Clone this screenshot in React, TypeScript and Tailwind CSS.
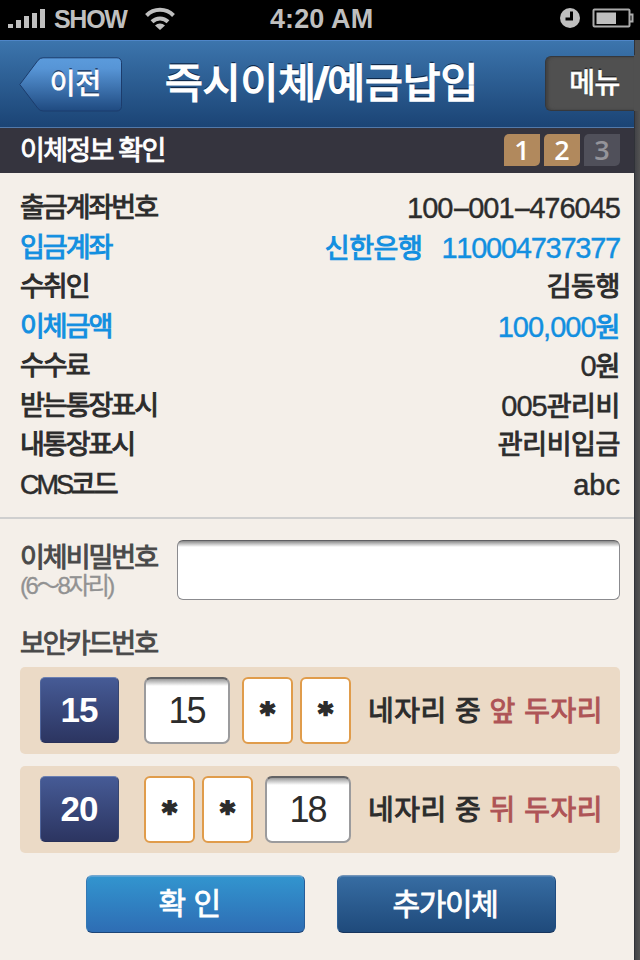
import React from "react";

type Row = { label: React.ReactNode; value: React.ReactNode; accent?: boolean };

const Dash = () => <span className="mx-[3.500px] inline-block scale-x-[2]">-</span>;

const rows: Row[] = [
  { label: "출금계좌번호", value: <Num>100<Dash />001<Dash />476045</Num> },
  { label: "입금계좌", value: <><Ko>신한은행</Ko><span className="w-[19px]" /><span className="text-[29px] tracking-[-1.250px] [-webkit-text-stroke:0.4px_currentColor] [font-kerning:none]">110004737377</span></>, accent: true },
  { label: "수취인", value: <Ko>김동행</Ko> },
  { label: "이체금액", value: <><Num>100,000</Num><Ko>원</Ko></>, accent: true },
  { label: "수수료", value: <><Num>0</Num><Ko>원</Ko></> },
  { label: "받는통장표시", value: <><Num>005</Num><Ko>관리비</Ko></> },
  { label: "내통장표시", value: <Ko>관리비입금</Ko> },
  { label: <><span className="tracking-[-3px] [-webkit-text-stroke:0.5px_currentColor]">CMS</span>코드</>, value: <span className="text-[29px] [-webkit-text-stroke:0.5px_currentColor]">abc</span> },
];

function Num({ children }: { children: React.ReactNode }) {
  return <span className="text-[29px] tracking-[-1px] [-webkit-text-stroke:0.4px_currentColor] [font-kerning:none]">{children}</span>;
}

function Ko({ children }: { children: React.ReactNode }) {
  return <span className="text-[27px] tracking-[-0.4px] [-webkit-text-stroke:1px_currentColor]">{children}</span>;
}

function StatusBar() {
  return (
    <div className="flex h-[40px] shrink-0 items-center bg-black text-[#bfbfbf]">
      <svg width="38" height="20" className="ml-[8px] mt-[-3px]" fill="#bfbfbf">
        <rect x="0" y="15" width="5" height="4" />
        <rect x="8" y="11" width="5" height="8" />
        <rect x="16" y="7" width="5" height="12" />
        <rect x="24" y="4" width="5" height="15" />
        <rect x="32" y="0" width="5" height="19" />
      </svg>
      <span className="ml-[8px] mt-[-1px] w-[72px] text-[25px] font-bold leading-none tracking-[-1.300px]">SHOW</span>
      <svg width="32" height="24" viewBox="0 0 32 24" className="ml-[18px] mt-[-2px]" fill="none" stroke="#bfbfbf" strokeWidth="4">
        <path d="M2.500 8.500a19 19 0 0 1 27 0" />
        <path d="M8 14.700a11.500 11.500 0 0 1 16 0" />
        <path d="M16 23l-5-4.500a7.500 7.500 0 0 1 10 0z" fill="#bfbfbf" stroke="none" />
      </svg>
      <span className="ml-[94px] mt-[-1px] w-[110px] whitespace-nowrap text-[27px] font-bold leading-none tracking-[0.100px]">4:20 AM</span>
      <svg width="20" height="20" className="ml-[180px] mt-[-4px]">
        <circle cx="10" cy="10" r="10" fill="#bfbfbf" />
        <path d="M11.500 3.500v7.500H5.500" fill="none" stroke="#000" strokeWidth="3" />
      </svg>
      <svg width="42" height="20" className="ml-[12px] mt-[-4px]">
        <rect x="1.500" y="1.500" width="36" height="17" rx="1" fill="none" stroke="#aaa" strokeWidth="2" />
        <rect x="4.500" y="4.500" width="19.500" height="11.500" fill="#bfbfbf" />
        <path d="M38 6.500h2.500v7H38" fill="none" stroke="#aaa" strokeWidth="2" />
      </svg>
    </div>
  );
}

function Header() {
  return (
    <header className="flex h-[88px] shrink-0 items-start border-b border-t border-b-[#5279aa] border-t-[#4f86c8] bg-linear-to-b from-[#3c75ad] to-[#1b4475]">
      <button className="relative ml-[19px] mt-[16px] h-[55px] w-[103px] shrink-0">
        <svg width="103" height="55" className="absolute left-0 top-0">
          <defs>
            <linearGradient id="back" x1="0" y1="0" x2="0" y2="1">
              <stop offset="0" stopColor="#5b9bdc" />
              <stop offset="0.2" stopColor="#5795d6" />
              <stop offset="1" stopColor="#1f4a80" />
            </linearGradient>
          </defs>
          <path d="M24 .8H98a4.500 4.500 0 0 1 4.500 4.500V49.500a4.500 4.500 0 0 1-4.500 4.500H24q-3 0-5-2.500L.8 27.500 19 3.300Q21 .8 24 .8z" fill="url(#back)" stroke="#1c3c6c" />
        </svg>
        <span className="relative ml-[10px] block text-[28px] leading-[50px] text-white [-webkit-text-stroke:0.8px_currentColor] [text-shadow:0_-2px_0_#25456f]">이전</span>
      </button>
      <h1 className="ml-[43px] w-[380px] shrink-0 whitespace-nowrap text-[41px] font-normal leading-[87px] text-white [-webkit-text-stroke:1.600px_currentColor] [text-shadow:0_-2px_0_#0f2a4c]">즉시이체<span className="inline-block scale-x-[1.2] scale-y-[1.1]">/</span>예금납입</h1>
      <button className="mt-[15px] h-[55px] w-[89px] shrink-0 rounded-l-[6px] border border-r-0 border-[#35383d] bg-[#505050] pl-[9px] text-[28px] leading-[52px] tracking-[-0.500px] text-white shadow-[inset_2px_0_3px_#404040] [-webkit-text-stroke:0.8px_currentColor] [text-shadow:0_-2px_0_#2a2a2a]">메뉴</button>
    </header>
  );
}

function Step({ n, on }: { n: number; on?: boolean }) {
  return (
    <span className={"h-[32px] w-[36px] rounded-br-[5px] rounded-tl-[5px] text-center font-['Open_Sans'] text-[27px] font-semibold leading-[32px] " + (on ? "bg-[#b1895d] text-white" : "bg-[#50505a] text-[#94949a]")}>{n}</span>
  );
}

function Star() {
  return (
    <span className="flex h-[67px] w-[51px] items-center justify-center rounded-[6px] border-2 border-[#e09c4b] bg-white font-['DejaVu_Sans'] text-[28px] font-bold text-[#2c2c2c]">
      <span className="mt-[7px] leading-none [-webkit-text-stroke:2px_currentColor]">*</span>
    </span>
  );
}

function Digits({ value }: { value: string }) {
  return (
    <span className="h-[67px] w-[86px] rounded-[7px] border-2 border-[#9b9b9d] border-t-[#636365] bg-[linear-gradient(#999,#fff_7px)] pr-[1px] text-center text-[36px] leading-[64px] tracking-[-2px] text-[#2c2c2c]">{value}</span>
  );
}

function CardRow({ no, value, first }: { no: string; value: string; first: boolean }) {
  return (
    <div className="flex h-[87px] items-start rounded-[5px] bg-[#ebdac6] pl-[20px] pt-[10px]">
      <span className="h-[66px] w-[79px] rounded-[5px] border border-b-[#293158] border-l-[#50659b] border-r-[#38466f] border-t-[#6c80b2] bg-linear-to-b from-[#465b96] to-[#2c3561] pr-px text-center text-[35px] font-bold leading-[64px] tracking-[-1px] text-white">{no}</span>
      <div className="ml-[25px] flex w-[207px] items-start">
        {first ? (
          <><Digits value={value} /><span className="w-[12px]" /><Star /><span className="w-[7px]" /><Star /></>
        ) : (
          <><Star /><span className="w-[7px]" /><Star /><span className="w-[12px]" /><Digits value={value} /></>
        )}
      </div>
      <span className="ml-[17px] mt-[2px] whitespace-nowrap text-[28px] leading-[65px] tracking-[0.500px] text-[#2c2c2c] [-webkit-text-stroke:1px_currentColor]">
        네자리 중 <span className="text-[#ae5456]">{first ? "앞" : "뒤"} 두자리</span>
      </span>
    </div>
  );
}

export default function App() {
  return (
    <div className="flex h-[960px] w-[640px] flex-col overflow-hidden bg-[#505050] font-['Liberation_Sans','Noto_Sans_CJK_KR',sans-serif]">
      <StatusBar />
      <div className="flex min-h-0 flex-1">
        <main className="flex w-[634px] shrink-0 flex-col bg-[#f4efe9]">
          <Header />
          <div className="flex h-[45px] shrink-0 items-center justify-between bg-[#35343e] pl-[20px] pr-[14px] text-white">
            <h2 className="mt-[2px] text-[27px] leading-none tracking-[-1.700px] [-webkit-text-stroke:0.9px_currentColor]">이체정보 확인</h2>
            <div className="mt-[-1px] flex gap-[4px]"><Step n={1} on /><Step n={2} on /><Step n={3} /></div>
          </div>
          <dl className="h-[346px] shrink-0 border-b-2 border-[#cfcfcf] pl-[20px] pr-[14px] pt-[16px] text-[#2c2c2c]">
            {rows.map((r, i) => (
              <div key={i} className={"flex h-[39.5px] items-center justify-between whitespace-pre leading-none " + (r.accent ? "text-[#128fe0]" : "")}>
                <dt className="text-[27px] tracking-[-2px] [-webkit-text-stroke:1px_currentColor]">{r.label}</dt>
                <dd className="flex items-baseline">{r.value}</dd>
              </div>
            ))}
          </dl>
          <div className="flex h-[103px] shrink-0 pl-[20px] pr-[14px] pt-[21px]">
            <div className="w-[157px] whitespace-nowrap pt-[4px] tracking-[-2px]">
              <div className="text-[27px] leading-[28px] text-[#494949] [-webkit-text-stroke:1px_currentColor]">이체비밀번호</div>
              <div className="text-[24px] leading-[28px] tracking-[-2.600px] text-[#929292] [-webkit-text-stroke:0.3px_currentColor]">(6～8자리)</div>
            </div>
            <div className="h-[60px] flex-1 rounded-[6px] border border-[#8b8b8f] border-t-[#5f5f62] bg-[linear-gradient(#888,#fff_6px)]" />
          </div>
          <div className="flex flex-1 flex-col pl-[20px] pr-[14px]">
            <h3 className="h-[45px] text-[27px] leading-[44px] tracking-[-2px] text-[#494949] [-webkit-text-stroke:1px_currentColor]">보안카드번호</h3>
            <CardRow no="15" value="15" first />
            <div className="h-[12px]" />
            <CardRow no="20" value="18" first={false} />
            <div className="ml-[66px] mt-[22px] flex gap-[32px] text-[30px] text-white">
              <button className="h-[58px] w-[219px] rounded-[6px] border border-b-[#1d4577] border-l-[#3478b4] border-r-[#275d99] border-t-[#75a8d0] bg-linear-to-b from-[#3295cf] to-[#2e6db4] pr-[12px] leading-[56px] tracking-[-0.500px] shadow-[inset_0_1px_0_#5ba3d4] [-webkit-text-stroke:0.8px_currentColor]">확 인</button>
              <button className="h-[58px] w-[219px] rounded-[6px] border border-b-[#17355d] border-l-[#31639a] border-r-[#1e4b80] border-t-[#7595b8] bg-linear-to-b from-[#376da3] to-[#1f4a7b] pr-[3px] leading-[57px] tracking-[-1.300px] shadow-[inset_0_1px_0_#5180b0] [-webkit-text-stroke:0.8px_currentColor]">추가이체</button>
            </div>
          </div>
        </main>
        <aside className="flex w-[6px] flex-col">
          <div className="h-[15px] border-l border-[#303238] bg-[#505050]" />
          <div className="h-[56px] bg-[#505050]" />
          <div className="flex-1 border-l border-[#303238] bg-linear-to-r from-[#424347] to-[#535353]" />
        </aside>
      </div>
    </div>
  );
}
